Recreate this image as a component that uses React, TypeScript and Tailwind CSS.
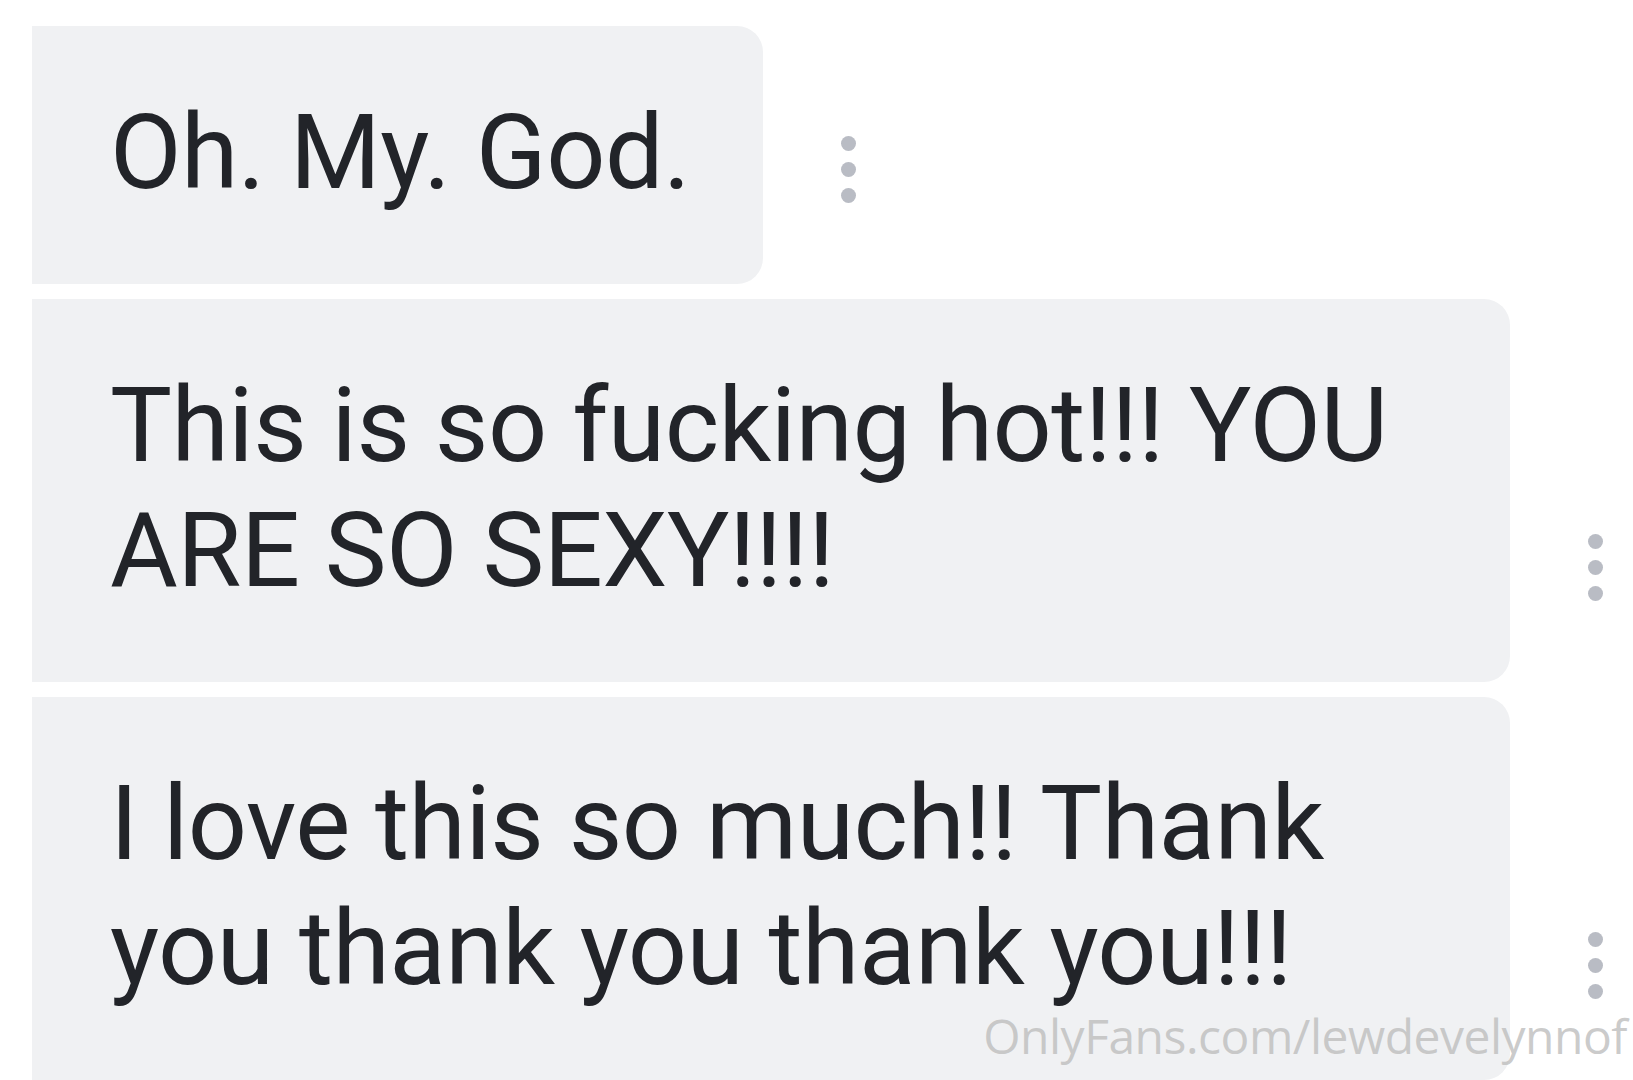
import { Fragment } from 'react'

type Message = {
  id: number
  lines: string[]
  width: string
}

const messages: Message[] = [
  { id: 1, lines: ['Oh. My. God.'], width: 'w-[731px]' },
  { id: 2, lines: ['This is so fucking hot!!! YOU', 'ARE SO SEXY!!!!'], width: 'w-[1478px]' },
  { id: 3, lines: ['I love this so much!! Thank', 'you thank you thank you!!!'], width: 'w-[1478px]' },
]

// vertical "more" button next to each bubble
const MoreDots = () => (
  <button className="ml-[78px] mb-[81px] flex flex-col items-center gap-[11px]">
    <span className="block h-[15px] w-[15px] rounded-full bg-[#b9bcc4]" />
    <span className="block h-[15px] w-[15px] rounded-full bg-[#b9bcc4]" />
    <span className="block h-[15px] w-[15px] rounded-full bg-[#b9bcc4]" />
  </button>
)

const Bubble = ({ message }: { message: Message }) => (
  <div className="flex items-end">
    <div
      className={`${message.width} rounded-r-[26px] bg-[#f0f1f3] pl-[78px] pr-[40px] pt-[64px] pb-[69px] text-[104px] leading-[125px] tracking-[-0.5px] text-[#222429]`}
    >
      {message.lines.map((line, i) => (
        <Fragment key={i}>
          {i > 0 && <br />}
          {line}
        </Fragment>
      ))}
    </div>
    <MoreDots />
  </div>
)

const App = () => {
  return (
    <div
      className="relative h-[1080px] w-[1633px] overflow-hidden bg-white pt-[26px] pl-[32px]"
      style={{ fontFamily: 'Roboto, "Liberation Sans", sans-serif' }}
    >
      <div className="flex flex-col gap-[15px]">
        {messages.map((m) => (
          <Bubble key={m.id} message={m} />
        ))}
      </div>
      <div className="absolute bottom-[20px] right-[6px] text-[48px] leading-none tracking-[-0.5px] text-[#bdbdbd]/80 font-['Open_Sans',sans-serif]">
        OnlyFans.com/lewdevelynnof
      </div>
    </div>
  )
}

export default App
